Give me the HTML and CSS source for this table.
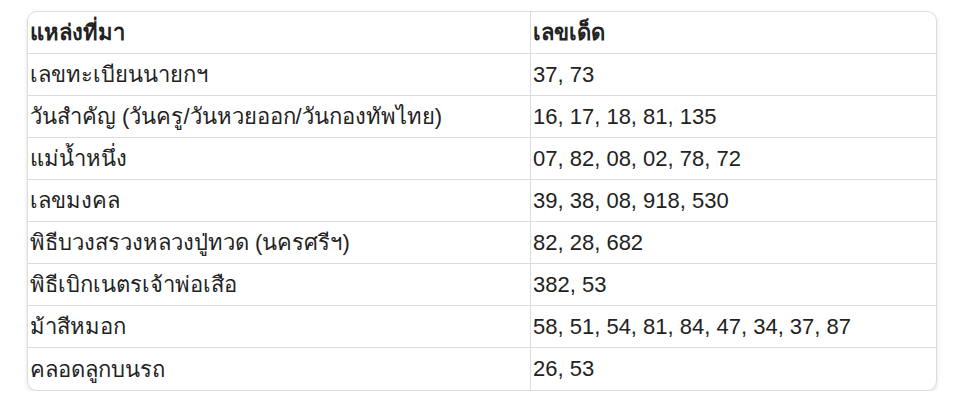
FILE: index.html
```html
<!DOCTYPE html>
<html lang="th">
<head>
<meta charset="utf-8">
<link rel="stylesheet" href="styles.css">
</head>
<body>
<div class="wrap">
<table class="tbl">
<thead>
<tr><th class="c1">แหล่งที่มา</th><th>เลขเด็ด</th></tr>
</thead>
<tbody>
<tr><td class="c1">เลขทะเบียนนายกฯ</td><td>37, 73</td></tr>
<tr><td class="c1">วันสำคัญ (วันครู/วันหวยออก/วันกองทัพไทย)</td><td>16, 17, 18, 81, 135</td></tr>
<tr><td class="c1">แม่น้ำหนึ่ง</td><td>07, 82, 08, 02, 78, 72</td></tr>
<tr><td class="c1">เลขมงคล</td><td>39, 38, 08, 918, 530</td></tr>
<tr><td class="c1">พิธีบวงสรวงหลวงปู่ทวด (นครศรีฯ)</td><td>82, 28, 682</td></tr>
<tr><td class="c1">พิธีเบิกเนตรเจ้าพ่อเสือ</td><td>382, 53</td></tr>
<tr><td class="c1">ม้าสีหมอก</td><td>58, 51, 54, 81, 84, 47, 34, 37, 87</td></tr>
<tr><td class="c1">คลอดลูกบนรถ</td><td>26, 53</td></tr>
</tbody>
</table>
</div>
</body>
</html>
```
FILE: styles.css
```css
html, body {
  margin: 0;
  padding: 0;
  background: #fff;
}
body {
  font-family: "Liberation Sans", Arial, sans-serif;
  color: #222;
}
.wrap {
  padding: 11px 0 0 27px;
}
.tbl {
  width: 910px;
  border-collapse: separate;
  border-spacing: 0;
  border: 1px solid #dcdcdc;
  border-radius: 10px;
  box-shadow: 0 2px 4px rgba(0,0,0,0.12);
  font-size: 22px;
}
.tbl th, .tbl td {
  height: 42px;
  padding: 0 2px;
  text-align: left;
  vertical-align: middle;
  border-bottom: 1px solid #dcdcdc;
  box-sizing: border-box;
}
.tbl th {
  font-weight: bold;
  color: #222;
}
.tbl tbody tr:last-child td {
  border-bottom: none;
}
.tbl .c1 {
  width: 503px;
  border-right: 1px solid #dcdcdc;
}
```
